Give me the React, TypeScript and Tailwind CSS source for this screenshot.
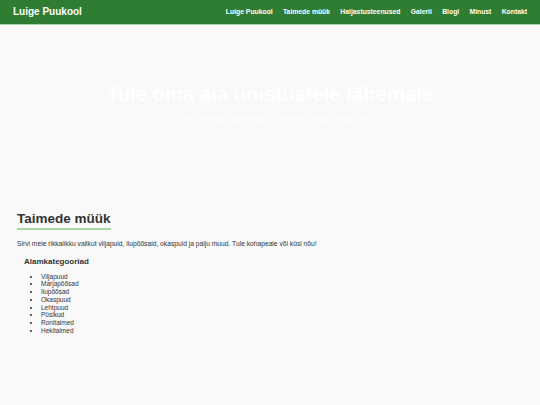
import React from "react";

const nav = ["Luige Puukool", "Taimede müük", "Haljastusteenused", "Galerii", "Blogi", "Minust", "Kontakt"];
const subs = ["Viljapuud", "Marjapõõsad", "Ilupõõsad", "Okaspuud", "Lehtpuud", "Püsikud", "Ronitaimed", "Hekitaimed"];

export default function App() {
  return (
    <div className="min-h-[405px] w-[540px] bg-[#f9f9f9] text-[#333] font-['Liberation_Sans',Arial,sans-serif]">
      <header className="h-[25px] bg-[#2e7d32] flex items-center justify-between pl-[13px] pr-[13px] border-b border-[#a5d6a7]">
        <div className="text-white font-bold text-[10px] leading-none">Luige Puukool</div>
        <nav className="flex gap-[10.3px]">
          {nav.map((n) => (
            <span key={n} className="text-white font-bold text-[6.8px] leading-none">{n}</span>
          ))}
        </nav>
      </header>
      <section className="h-[165px] flex flex-col items-center pt-[59px]">
        <h1 className="text-white font-bold text-[20.3px] leading-none">Tule oma aia unistustele lähemale</h1>
        <p className="text-white text-[8.6px] leading-none mt-[11px]">Leia siit viljikuid, ilupõõsaid ja suvine kõrvik ootab sind!</p>
      </section>
      <main className="px-[17px] pt-[16px]">
        <h2 className="inline-block text-[13.5px] font-bold leading-none pb-[2px] border-b-2 border-[#a5d6a7] text-[#333]">Taimede müük</h2>
        <p className="text-[6.7px] mt-[11px] leading-none">Sirvi meie rikkalikku valikut viljapuid, ilupõõsaid, okaspuid ja palju muud. Tule kohapeale või küsi nõu!</p>
        <div className="pl-[7px] mt-[10px]">
          <h3 className="text-[8px] font-bold leading-none">Alamkategooriad</h3>
          <ul className="list-disc pl-[17px] mt-[7px] text-[6.5px] leading-[7.75px]">
            {subs.map((s) => (
              <li key={s}>{s}</li>
            ))}
          </ul>
        </div>
      </main>
    </div>
  );
}
